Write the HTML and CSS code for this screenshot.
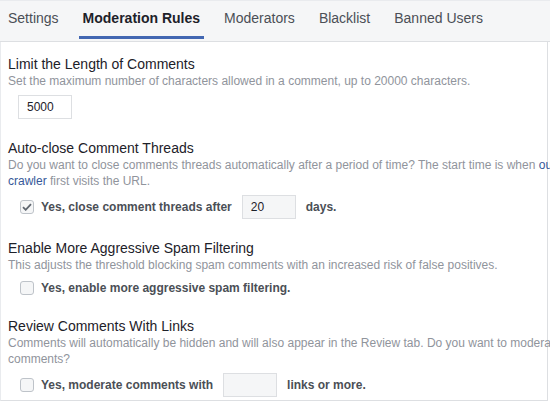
FILE: index.html
```html
<!DOCTYPE html>
<html>
<head>
<meta charset="utf-8">
<link rel="stylesheet" href="styles.css">
</head>
<body>
<div class="tabs">
  <span class="tab">Settings</span>
  <span class="tab active">Moderation Rules</span>
  <span class="tab">Moderators</span>
  <span class="tab">Blacklist</span>
  <span class="tab">Banned Users</span>
</div>
<div class="panel">
  <div class="section">
    <div class="title">Limit the Length of Comments</div>
    <div class="desc">Set the maximum number of characters allowed in a comment, up to 20000 characters.</div>
    <div class="row row-input">
      <span class="field">5000</span>
    </div>
  </div>
  <div class="section">
    <div class="title">Auto-close Comment Threads</div>
    <div class="desc">Do you want to close comments threads automatically after a period of time? The start time is when <a class="link">our crawler</a> first visits the URL.</div>
    <div class="row row-check">
      <span class="box checked"><svg width="10" height="8" viewBox="0 0 10 8"><path d="M1 4.2 L3.7 6.8 L9 1.2" fill="none" stroke="#606770" stroke-width="1.8"/></svg></span>
      <span class="label">Yes, close comment threads after</span>
      <span class="field field-grey">20</span>
      <span class="label">days.</span>
    </div>
  </div>
  <div class="section">
    <div class="title">Enable More Aggressive Spam Filtering</div>
    <div class="desc">This adjusts the threshold blocking spam comments with an increased risk of false positives.</div>
    <div class="row row-check short">
      <span class="box"></span>
      <span class="label">Yes, enable more aggressive spam filtering.</span>
    </div>
  </div>
  <div class="section last">
    <div class="title">Review Comments With Links</div>
    <div class="desc">Comments will automatically be hidden and will also appear in the Review tab. Do you want to moderate these comments?</div>
    <div class="row row-check">
      <span class="box"></span>
      <span class="label">Yes, moderate comments with</span>
      <span class="field field-grey"></span>
      <span class="label">links or more.</span>
    </div>
  </div>
</div>
</body>
</html>
```
FILE: styles.css
```css
html, body {
  margin: 0;
  padding: 0;
  background: #fff;
  overflow: hidden;
}
body {
  font-family: "Liberation Sans", Arial, sans-serif;
  width: 550px;
  height: 403px;
}
.tabs {
  display: flex;
  gap: 16px;
  padding-left: 4px;
  background: #f5f6f7;
  border-top: 1px solid #e9ebee;
  border-bottom: 1px solid #dddfe2;
  box-sizing: border-box;
  height: 42px;
}
.tab {
  padding: 0 4px;
  height: 36px;
  line-height: 36px;
  font-size: 14px;
  color: #4b4f56;
  border-bottom: 3px solid transparent;
  margin-top: -1px;
}
.tab.active {
  font-weight: bold;
  color: #1d2129;
  border-bottom-color: #4267b2;
}
.panel {
  width: 548px;
  box-sizing: border-box;
  border-left: 1px solid #e9ebee;
  border-right: 1px solid #dddfe2;
  border-bottom: 1px solid #dddfe2;
  padding: 13px 0 3px 7px;
}
.section {
  margin-bottom: 20px;
}
.section.last {
  margin-bottom: 0;
}
.title {
  font-size: 14px;
  line-height: 18px;
  color: #1d2129;
}
.desc {
  width: 588px;
  font-size: 12px;
  line-height: 16px;
  color: #90949c;
}
.link {
  color: #365899;
  text-decoration: none;
}
.row {
  display: flex;
  align-items: center;
  margin-top: 6px;
  height: 24px;
}
.row.short {
  height: 18px;
}
.row-input {
  padding-left: 10px;
}
.row-check {
  padding-left: 12px;
}
.field {
  box-sizing: border-box;
  width: 54px;
  height: 24px;
  border: 1px solid #dddfe2;
  background: #fff;
  font-size: 12px;
  line-height: 22px;
  padding-left: 8px;
  color: #1d2129;
}
.field-grey {
  background: #f5f6f7;
  margin: 0 10px;
}
.box {
  box-sizing: border-box;
  width: 14px;
  height: 14px;
  border: 1px solid #bec3c9;
  border-radius: 3px;
  background: #f5f6f7;
  margin-right: 7px;
  display: flex;
  align-items: center;
  justify-content: center;
}
.label {
  font-size: 12px;
  font-weight: bold;
  color: #4b4f56;
}
```
